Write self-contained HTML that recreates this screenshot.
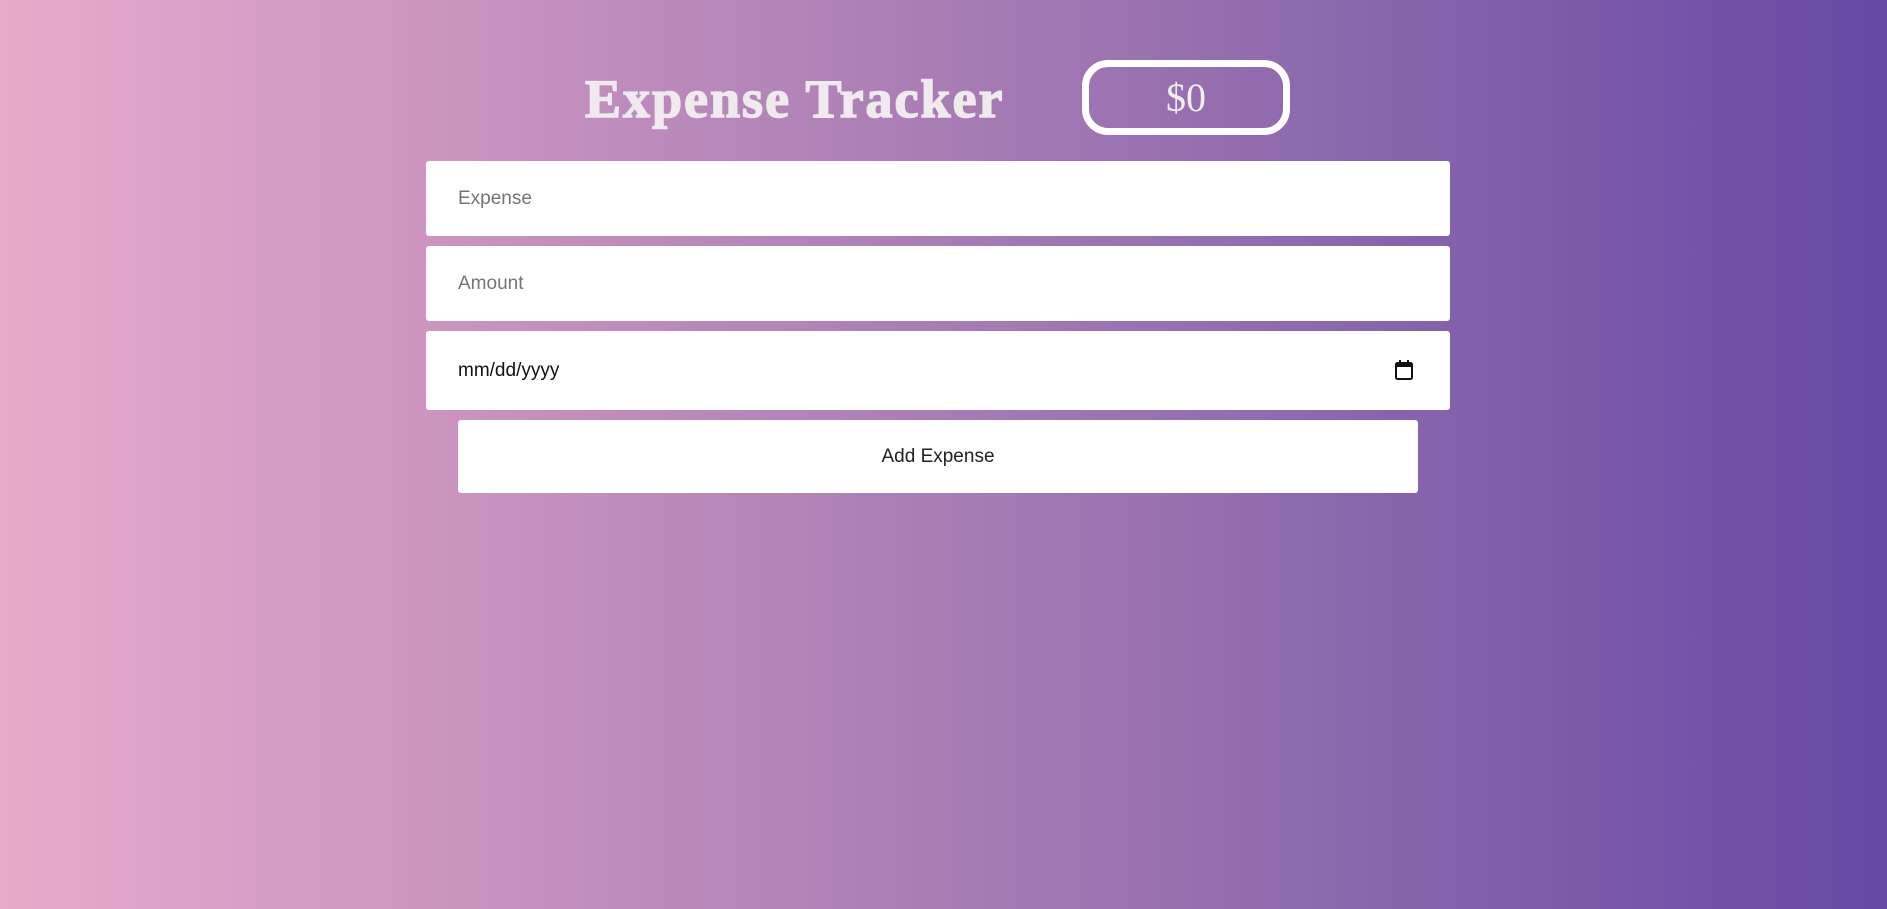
<!DOCTYPE html>
<html><head><meta charset="utf-8"><style>
html,body{margin:0;padding:0;width:1887px;height:909px;overflow:hidden}
body{background:linear-gradient(to right,#e9aacb 0%,#a87db4 50%,#6549a3 100%);font-family:"Liberation Sans",sans-serif;position:relative}
.title{position:absolute;left:585px;top:66px;font-family:"Liberation Serif",serif;font-weight:700;font-size:54px;letter-spacing:2px;color:#eeeaee;-webkit-text-stroke:1.5px #eeeaee;line-height:66px;white-space:nowrap}
.total{position:absolute;left:1082px;top:60px;width:194px;height:61px;border:7px solid #fff;border-radius:26px;color:#eee;font-family:"Liberation Serif",serif;font-size:40px;text-align:center;line-height:61px}
.in{position:absolute;left:426px;width:1024px;background:#fff;border-radius:3px;font-size:19px;color:#757575}
.in span{position:absolute;left:32px;top:50%;transform:translateY(-50%)}
.btn{position:absolute;left:458px;top:420px;width:960px;height:73px;background:#fff;border-radius:3px;font-size:19px;color:#222;text-align:center;line-height:73px}
</style></head><body>
<div class="title">Expense Tracker</div>
<div class="total">$0</div>
<div class="in" style="top:161px;height:75px"><span>Expense</span></div>
<div class="in" style="top:246px;height:75px"><span>Amount</span></div>
<div class="in" style="top:331px;height:79px"><span style="color:#111">mm/dd/yyyy</span>
<svg style="position:absolute;right:36px;top:28px" width="20" height="22" viewBox="0 0 20 22"><rect x="2" y="4" width="16" height="16" rx="1.5" fill="none" stroke="#111" stroke-width="2"/><rect x="2" y="4" width="16" height="4" fill="#111"/><rect x="5" y="1" width="2" height="4" fill="#111"/><rect x="13" y="1" width="2" height="4" fill="#111"/></svg></div>
<div class="btn">Add Expense</div>
</body></html>
